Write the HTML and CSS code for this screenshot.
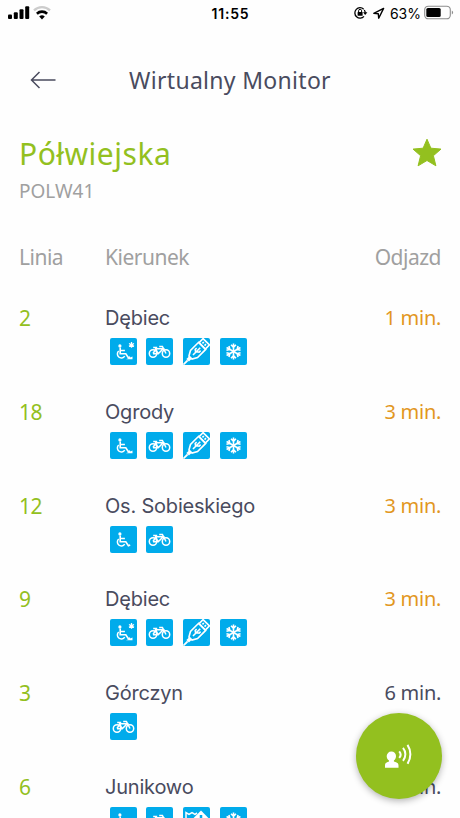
FILE: index.html
```
<!DOCTYPE html>
<html lang="pl">
<head>
    <meta charset="UTF-8">
    <meta name="viewport" content="width=device-width, initial-scale=1.0">
    <title>Wirtualny Monitor</title>
    <link rel="stylesheet" href="styles.css">
</head>
<body>
    <svg class="symbols">
        <symbol id="wheelchair" viewBox="0 0 27 27">
            <circle cx="9.9" cy="7.9" r="1.6" fill="#fff"/>
            <path d="M10.2 9.5v6.2h5.6l2.6 4 1.8-.7M10.3 12.5h4.6" fill="none" stroke="#fff" stroke-width="1.6"/>
            <path d="M8.7 13a4 4 0 1 0 6 5.2" fill="none" stroke="#fff" stroke-width="1.5"/>
        </symbol>
        <symbol id="ramp" viewBox="0 0 27 27">
            <path d="M16 21.2l6.5-2.8v2.8z" fill="#fff"/>
        </symbol>
        <symbol id="asterisk" viewBox="0 0 27 27">
            <path d="M21.5 4v5.8M19 5.5l5 2.9M19 8.4l5-2.9" stroke="#fff" stroke-width="1.3"/>
        </symbol>
        <symbol id="bike" viewBox="0 0 27 27">
            <g fill="none" stroke="#fff" stroke-width="1.5">
                <circle cx="7" cy="15.5" r="3.7"/>
                <circle cx="20" cy="15.5" r="3.7"/>
                <path d="M7 15.5l3-4.7h7.2l-5 5H7M9.3 9.8l2.7 6M7.2 9.6h4M20 15.5l-3.6-7.1h-3.2"/>
            </g>
        </symbol>
        <symbol id="usb" viewBox="0 0 27 27">
            <g transform="rotate(45 13.5 13.5)" fill="none" stroke="#fff" stroke-width="1.6">
                <path d="M8.5 5.5h10V17l-2.8 5h-4.4l-2.8-5z"/>
                <path d="M9-.3h9v5.8H9zM12 1.6v2M15 1.6v2"/>
                <path d="M13.5 22v4" stroke-width="3.6"/>
                <path d="M13.5 26v6" stroke-width="1.8"/>
                <path d="M13.5 8.2v10.3M11.2 11v2l2.3 1.7M15.8 10v2l-2.3 1.7"/>
            </g>
        </symbol>
        <symbol id="snow" viewBox="0 0 27 27">
            <g fill="none" stroke="#fff" stroke-width="1.6">
                <path id="arm" d="M13.5 13.5v-8M11 6.8l2.5 2.5L16 6.8"/>
                <use href="#arm" transform="rotate(60 13.5 13.5)"/>
                <use href="#arm" transform="rotate(120 13.5 13.5)"/>
                <use href="#arm" transform="rotate(180 13.5 13.5)"/>
                <use href="#arm" transform="rotate(240 13.5 13.5)"/>
                <use href="#arm" transform="rotate(300 13.5 13.5)"/>
            </g>
        </symbol>
        <symbol id="ticket" viewBox="0 0 27 27">
            <path d="M3 16V5.5l3 1.8 3-1.8 3 1.8 2-1.3" fill="none" stroke="#fff" stroke-width="1.5"/>
            <path d="M18 3.6l7.4 7.4-7.4 7.4-7.4-7.4z" fill="#fff"/>
            <path d="M18 8v5" stroke="#00abeb" stroke-width="2.5"/>
        </symbol>
    </svg>

    <div class="status-bar">
        <svg width="45" height="16" viewBox="0 0 45 16">
            <rect x="0" y="9.5" width="4" height="4.5" rx="1"/>
            <rect x="5.8" y="7.3" width="4" height="6.7" rx="1"/>
            <rect x="11.5" y="4.3" width="4" height="9.7" rx="1"/>
            <rect x="17.2" y="1.2" width="4" height="12.8" rx="1"/>
            <path d="M26 5.4a11.5 11.5 0 0 1 16 0" fill="none" stroke="#ccc" stroke-width="2.3"/>
            <path d="M28.9 8.7a7.4 7.4 0 0 1 10.2 0" fill="none" stroke="#000" stroke-width="2.6"/>
            <path d="M34 14.4l-2.8-2.9a4 4 0 0 1 5.6 0z"/>
        </svg>
        <span class="clock">11:55</span>
        <div class="status-right">
            <svg width="34" height="16" viewBox="0 0 34 16">
                <path d="M9.7 4.2a5.2 5.2 0 1 0 .3 7.1M10.3 5a5 5 0 0 1 .9 2.8" fill="none" stroke="#000" stroke-width="1.3"/>
                <path d="M9 7.2h4.4l-2.2 2.7z"/>
                <rect x="3.6" y="7" width="5" height="3.8" rx=".5"/>
                <path d="M4.6 7V5.8a1.5 1.5 0 0 1 3 0V7" fill="none" stroke="#000"/>
                <path d="M19.8 8.4l9.8-5-4.9 9.8-.4-4.5z" fill="none" stroke="#000" stroke-width="1.4" stroke-linejoin="round"/>
            </svg>
            <span class="percent">63%</span>
            <svg width="30" height="16" viewBox="0 0 30 16">
                <rect x=".7" y="1.2" width="25.6" height="12.6" rx="3.6" fill="none" stroke="#8d8d8d" stroke-width="1.1"/>
                <rect x="2.3" y="2.9" width="14.4" height="9.2" rx="1.6"/>
                <path d="M27.8 5.5a2.2 2.2 0 0 1 0 4z" fill="#8d8d8d"/>
            </svg>
        </div>
    </div>

    <header class="header">
        <svg width="26" height="18" viewBox="0 0 26 18">
            <path d="M25.5 9h-24M9.5 1l-8 8 8 8" fill="none" stroke="#494b5e" stroke-width="1.5"/>
        </svg>
        <h1>Wirtualny Monitor</h1>
    </header>

    <section class="stop">
        <div>
            <h2>Półwiejska</h2>
            <p>POLW41</p>
        </div>
        <svg class="star" width="30" height="30" viewBox="0 0 30 30">
            <path d="M15 1.2l3.9 9 10.1.9-7.6 6.6 2.5 10.1-8.9-5.3-8.9 5.3 2.5-10.1L1 11.1l10.1-.9z" fill="#93c01f" stroke="#93c01f" stroke-linejoin="round"/>
        </svg>
    </section>

    <div class="row labels">
        <span>Linia</span>
        <span>Kierunek</span>
        <span class="time">Odjazd</span>
    </div>

    <main>
        <div class="row">
            <span class="line">2</span>
            <div>
                <span class="name">Dębiec</span>
                <div class="icons">
                    <svg><use href="#wheelchair"/><use href="#ramp"/><use href="#asterisk"/></svg>
                    <svg><use href="#bike"/></svg>
                    <svg><use href="#usb"/></svg>
                    <svg><use href="#snow"/></svg>
                </div>
            </div>
            <span class="time soon">1 min.</span>
        </div>
        <div class="row">
            <span class="line">18</span>
            <div>
                <span class="name">Ogrody</span>
                <div class="icons">
                    <svg><use href="#wheelchair"/><use href="#ramp"/></svg>
                    <svg><use href="#bike"/></svg>
                    <svg><use href="#usb"/></svg>
                    <svg><use href="#snow"/></svg>
                </div>
            </div>
            <span class="time soon">3 min.</span>
        </div>
        <div class="row">
            <span class="line">12</span>
            <div>
                <span class="name">Os. Sobieskiego</span>
                <div class="icons">
                    <svg><use href="#wheelchair"/></svg>
                    <svg><use href="#bike"/></svg>
                </div>
            </div>
            <span class="time soon">3 min.</span>
        </div>
        <div class="row">
            <span class="line">9</span>
            <div>
                <span class="name">Dębiec</span>
                <div class="icons">
                    <svg><use href="#wheelchair"/><use href="#ramp"/><use href="#asterisk"/></svg>
                    <svg><use href="#bike"/></svg>
                    <svg><use href="#usb"/></svg>
                    <svg><use href="#snow"/></svg>
                </div>
            </div>
            <span class="time soon">3 min.</span>
        </div>
        <div class="row">
            <span class="line">3</span>
            <div>
                <span class="name">Górczyn</span>
                <div class="icons">
                    <svg><use href="#bike"/></svg>
                </div>
            </div>
            <span class="time">6 min.</span>
        </div>
        <div class="row last">
            <span class="line">6</span>
            <div>
                <span class="name">Junikowo</span>
                <div class="icons">
                    <svg><use href="#wheelchair"/></svg>
                    <svg><use href="#bike"/></svg>
                    <svg><use href="#ticket"/></svg>
                    <svg><use href="#snow"/></svg>
                </div>
            </div>
            <span class="time">6 min.</span>
        </div>
    </main>

    <button class="speak" aria-label="Czytaj">
        <svg width="86" height="86" viewBox="0 0 86 86">
            <path d="M35.3 38.5a4.6 4.6 0 0 1 4.7 4.7c0 2-.9 3.3-2.1 4.2v1c2.8.7 4.6 1.7 4.6 4.1v2.3H29v-2.3c0-2.4 1.5-3.4 4-4.1v-1c-1.4-1-2.3-2.3-2.3-4.2a4.6 4.6 0 0 1 4.6-4.7z" fill="#fff"/>
            <g fill="none" stroke="#fff" stroke-width="2">
                <path d="M43.2 38.3a5 5 0 0 1 0 6.6"/>
                <path d="M47 34.900a10 10 0 0 1 0 12.900"/>
                <path d="M51.500 31.900a17 17 0 0 1 0 18.900"/>
            </g>
        </svg>
    </button>
</body>
</html>
```
FILE: styles.css
```
* {
    box-sizing: border-box;
}
body {
    position: relative;
    margin: 0;
    height: 818px;
    overflow: hidden;
    background: #fefefe;
    color: #494b5e;
    font-family: "Noto Sans", sans-serif;
}
h1, h2, p {
    margin: 0;
    font-weight: 400;
}
.symbols {
    display: none;
}
.status-bar {
    display: grid;
    grid-template-columns: 1fr auto 1fr;
    align-items: center;
    height: 26px;
    padding: 0 6px 0 8px;
    color: #000;
    font-family: Inter, sans-serif;
}
.clock {
    font-size: 14px;
    font-weight: 600;
    letter-spacing: 0.8px;
    margin-right: 1px;
}
.status-right {
    display: flex;
    justify-content: flex-end;
    align-items: center;
}
.percent {
    margin: 0 3px 0 2px;
    font-size: 14px;
}
.header {
    display: grid;
    grid-template-columns: 60px 1fr 60px;
    align-items: center;
    height: 108px;
    padding: 0 30px;
}
.header h1 {
    font-size: 23px;
    letter-spacing: 0.3px;
    text-align: center;
    white-space: nowrap;
}
.stop {
    display: flex;
    justify-content: space-between;
    padding: 0 18px 0 19px;
    height: 107px;
}
.stop h2 {
    color: #93c01f;
    font-size: 30px;
    letter-spacing: 0.5px;
    line-height: 39px;
}
.stop p {
    color: #a0a0a0;
    font-size: 19px;
    line-height: 37px;
}
.star {
    margin-top: 4px;
}
.row {
    display: grid;
    grid-template-columns: 86px 1fr auto;
    height: 93.8px;
    padding: 0 19px;
    font-size: 21px;
    line-height: 32px;
    letter-spacing: -0.5px;
}
.labels {
    height: 61px;
    color: #a0a0a0;
}
/* cut off by the bottom of the screen */
.last {
    height: 47px;
    overflow: hidden;
}
.line {
    color: #93c01f;
}
.name {
    display: block;
    font-family: Inter, sans-serif;
    font-size: 20px;
    letter-spacing: -0.2px;
}
.time {
    text-align: right;
}
main .time {
    font-size: 20px;
    letter-spacing: -0.3px;
}
.soon {
    color: #e2971f;
}
.icons {
    display: flex;
    gap: 9.8px;
    margin: 4px 0 0 4.6px;
}
.icons svg {
    width: 27px;
    height: 27px;
    border-radius: 2px;
    background: #00abeb;
}
.speak {
    position: absolute;
    right: 18px;
    bottom: 19px;
    width: 86px;
    height: 86px;
    padding: 0;
    border: none;
    border-radius: 50%;
    background: #93c01f;
    box-shadow: 0 2px 7px rgba(0, 0, 0, 0.3);
}
```
